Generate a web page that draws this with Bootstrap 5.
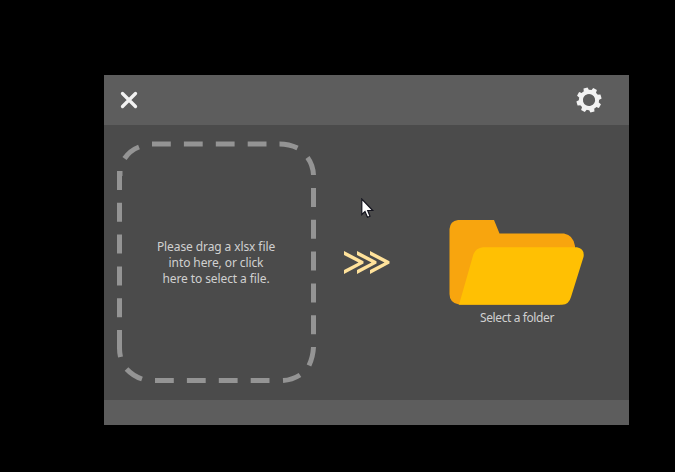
<!DOCTYPE html>
<html lang="en">
<head>
<meta charset="utf-8">
<meta name="viewport" content="width=device-width, initial-scale=1">
<title>File converter</title>
<link href="https://cdn.jsdelivr.net/npm/bootstrap@5.3.0/dist/css/bootstrap.min.css" rel="stylesheet">
<style>
body{background:#000;height:472px;font-family:"Noto Sans","Open Sans",sans-serif;font-size:12px;line-height:16px;color:#d0d0d0;padding:75px 46px 47px 104px}
.app-window{width:525px;height:350px;background:#4b4b4b}
.title-bar{height:50px;background:#5d5d5d;padding:0 27px 0 16px}
.status-bar{height:25px;background:#5d5d5d}
.plain-btn{background:none;border:0;padding:0;line-height:0}
.work-area{padding-left:12px}
.drop-zone{width:200px;height:241px;margin-top:16px}
.drop-text{letter-spacing:-.1px;padding-top:2px}
.arrows{margin:120px 0 0 27px}
.folder-btn{margin:94px 0 0 57px;width:138px;color:inherit;line-height:16px;letter-spacing:-.4px}
.folder-label{padding-top:3px}
.pointer{left:361px;top:198px;pointer-events:none}
svg{display:block}
</style>
</head>
<body>
<main class="app-window d-flex flex-column">
  <header class="title-bar d-flex align-items-center justify-content-between">
    <button class="plain-btn" aria-label="Close"><svg width="18" height="18" viewBox="0 0 18 18"><path d="M2.500 2.500 15.500 15.500M15.500 2.500 2.500 15.500" stroke="#f2f2f2" stroke-width="3.3" stroke-linecap="round"/></svg></button>
    <button class="plain-btn" aria-label="Settings"><svg width="26" height="26" viewBox="-13 -13 26 26"><g fill="#f2f2f2" transform="rotate(-16)"><circle r="8.100" fill="none" stroke="#f2f2f2" stroke-width="4"/><g id="teeth"><path id="tooth" d="M-2.800-9-2.100-12.500H2.100L2.800-9Z"/><use href="#tooth" transform="rotate(45)"/><use href="#tooth" transform="rotate(90)"/><use href="#tooth" transform="rotate(135)"/></g><use href="#teeth" transform="rotate(180)"/></g></svg></button>
  </header>
  <section class="work-area d-flex flex-grow-1 align-items-start">
    <div class="drop-zone position-relative d-flex align-items-center justify-content-center text-center">
      <svg class="position-absolute top-0 start-0" width="200" height="242" viewBox="116 141 200 242" fill="none" stroke="#949494" stroke-width="5">
        <path d="M152 144H267M155 380.500H270" stroke-dasharray="18.8 13.1"/>
        <path d="M119.500 171V349M313.500 188V335" stroke-dasharray="19 12.8"/>
        <path d="M124.500 158.500Q130 150.500 139 147M279.500 144Q289 144 297.500 148M307.500 157.500Q313 165 313.500 175M313.500 347Q313 357 309 365.500M300 375Q292 380 283 380.500M142 379Q133 376 126.500 369M119.500 348Q119.500 353 120.500 357M120 171V176"/>
      </svg>
      <div class="drop-text">Please drag a xlsx file<br>into here, or click<br>here to select a file.</div>
    </div>
    <svg class="arrows" width="48" height="30" viewBox="343 245 48 30" fill="#ffe29b"><path id="chev" d="M344 251 363.500 261.200V263.500L344 274V270L358.500 262.400 344 255Z"/><use href="#chev" x="13"/><use href="#chev" x="26"/></svg>
    <button class="plain-btn folder-btn">
      <svg width="138" height="88" viewBox="448 219 138 88"><path fill="#f8a50e" d="M458 220H494L499.500 233.400H564Q573.500 235 575 246V275L560 304.500H459Q449.500 303 449.500 294V229Q450 221 458 220Z"/><path fill="#ffc003" d="M483 247.300H577Q585 249 583.500 257L571 297Q569 304.500 562 304.700H459L473.500 254Q476 248 483 247.300Z"/></svg>
      <span class="folder-label d-block">Select a folder</span>
    </button>
  </section>
  <footer class="status-bar"></footer>
</main>
<svg class="pointer position-absolute" width="14" height="22" viewBox="0 0 14 22"><path d="M.8 1V16.500L4 13.500 6.500 19.300 9 18.200 6.700 12.500H11.700Z" fill="#fff" stroke="#15151f" stroke-width="1.200"/></svg>
<script src="https://cdn.jsdelivr.net/npm/bootstrap@5.3.0/dist/js/bootstrap.bundle.min.js"></script>
</body>
</html>
